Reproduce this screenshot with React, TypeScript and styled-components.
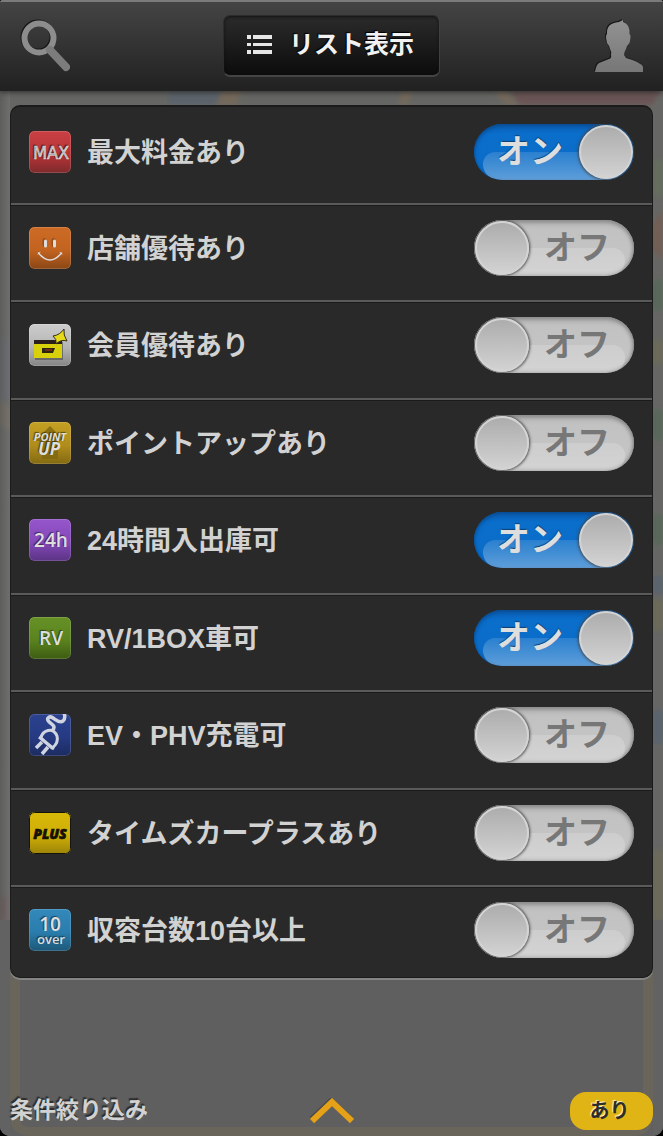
import React from "react";
import styled, { createGlobalStyle, css } from "styled-components";

const GlobalStyle = createGlobalStyle`
  * { box-sizing: border-box; }
  html { background: #000; }
  body {
    margin: 0;
    font-family: "Liberation Sans", "Noto Sans CJK JP", sans-serif;
    font-weight: 700;
    color: #d2d2d2;
  }
  button { font: inherit; color: inherit; border: 0; padding: 0; background: none; cursor: pointer; }
`;

const Screen = styled.div`
  position: relative;
  isolation: isolate;
  display: flex;
  flex-direction: column;
  min-height: 100vh;
  overflow: hidden;
  border-radius: 3px 3px 10px 10px;
  background: #606060;
`;

const MapLayer = styled.svg`
  position: absolute;
  inset: 0;
  z-index: -1;
  width: 100%;
  height: 100%;
`;

const Header = styled.header`
  display: grid;
  grid-template-columns: 1fr auto 1fr;
  align-items: center;
  height: 91px;
  padding: 0 20px 2px;
  border-top: 2px solid #7b7b7b;
  background: linear-gradient(#444, #212121);
  box-shadow: 0 1px 6px rgba(0, 0, 0, 0.6);
`;

const IconButton = styled.button<{ $end?: boolean }>`
  display: flex;
  justify-self: ${(p) => (p.$end ? "end" : "start")};
`;

const ListButton = styled.button`
  && {
    display: flex;
    align-items: center;
    gap: 17px;
    height: 62px;
    padding: 0 25px 2px 23px;
    border: 1px solid #2c2c2c;
    border-bottom: 2px solid #444;
    border-right-color: #404040;
    border-radius: 7px;
    background: linear-gradient(#2b2b2b, #0c0c0c);
    box-shadow: inset 0 1px 3px #111;
    color: #f2f2f2;
    font-size: 25px;
    line-height: 30px;
    text-shadow: -1px -1px 1px #000;
  }
`;

const Panel = styled.ul`
  margin: 14px 10px 0;
  padding: 0;
  list-style: none;
  border-radius: 10px;
  overflow: hidden;
  background: #292929;
  border: 1px solid #1b1b1b;
  border-top: 2px solid #1b1b1b;
  box-shadow: 0 2px 0 #858585;
`;

const Item = styled.li`
  height: 97px;
  padding: 15px 18px 0;
  border-top: 2px solid #5a5a5a;
  box-shadow: inset 0 1px 0 #1b1b1b;
  &:nth-child(odd) { height: 98px; }
  &:first-child {
    height: 96px;
    padding-top: 17px;
    border-top: 0;
    box-shadow: none;
  }
  &:last-child { height: 92px; }
`;

const ItemLabel = styled.label`
  display: flex;
  align-items: center;
  gap: 16px;
  cursor: pointer;
`;

const ItemText = styled.span`
  flex: 1;
  padding-top: 2px;
  font-size: 27px;
  line-height: 54px;
  white-space: nowrap;
`;

const SwitchBox = styled.span`
  position: relative;
  display: block;
  width: 160px;
`;

const SwitchInput = styled.input`
  position: absolute;
  inset: 0;
  width: 100%;
  height: 100%;
  margin: 0;
  opacity: 0;
  cursor: pointer;
`;

const Track = styled.span<{ $on: boolean }>`
  position: relative;
  isolation: isolate;
  display: flex;
  align-items: center;
  justify-content: space-between;
  height: 56px;
  padding: 0 1px;
  border-radius: 28px;
  overflow: hidden;
  font-size: 33px;
  line-height: 56px;
  &::before {
    content: "";
    position: absolute;
    z-index: -1;
    inset: 28px 9px 0;
    border-radius: 20px 20px 26px 26px;
    background: ${(p) =>
      p.$on
        ? "linear-gradient(rgba(255,255,255,.13), rgba(255,255,255,.34))"
        : "linear-gradient(rgba(255,255,255,.16), rgba(255,255,255,.24))"};
  }
  ${(p) =>
    p.$on
      ? css`
          flex-direction: row-reverse;
          color: #dedede;
          text-shadow: 0 -1px 1px #0a4076;
          background: linear-gradient(#0a5fb4, #0a6ecb 18%, #0b6cc6);
          box-shadow: inset 0 2px 4px #0a4c92, inset 0 0 2px #0a4c92;
        `
      : css`
          color: #777;
          background: linear-gradient(#b4b4b4, #c2c2c2 18%, #c6c6c6);
          box-shadow: inset 0 2px 4px #8c8c8c, inset 0 0 4px #777;
        `}
`;

const TrackText = styled.span<{ $on: boolean }>`
  padding: ${(p) => (p.$on ? "0 0 0 22px" : "0 23px 0 0")};
`;

const Knob = styled.span`
  width: 54px;
  height: 54px;
  border-radius: 50%;
  border: 2px solid #d4d4d4;
  background: linear-gradient(#adadad, #d2d2d2);
  box-shadow: 0 0 3px 1px #444;
`;

const Footer = styled.footer`
  display: grid;
  grid-template-columns: 1fr auto 1fr;
  align-items: center;
  margin-top: auto;
  padding: 0 10px 6px;
`;

const FooterText = styled.span`
  font-size: 23px;
  line-height: 36px;
  padding-bottom: 2px;
  white-space: nowrap;
  text-shadow: -1px -2px 1px #2c2c2c;
`;

const StatusPill = styled.button`
  && {
    justify-self: end;
    width: 83px;
    height: 38px;
    padding-right: 4px;
    border-radius: 16px;
    background: #e0b414;
    color: #2c2c2c;
    font-size: 20px;
    line-height: 36px;
    text-shadow: -1px -1px 1px #fff4cc;
  }
`;

const Badge = styled.svg`
  display: block;
  flex: none;
  width: 42px;
  height: 42px;
  border-radius: 5px;
`;

type Kind = "max" | "smile" | "card" | "point" | "day" | "rv" | "plug" | "plus" | "over";

const badgeColors: Record<Kind, [string, string, string]> = {
  max: ["#c94043", "#b93438", "#7d2a2c"],
  smile: ["#cd6b25", "#c26320", "#8a4715"],
  card: ["#cdcdcd", "#b5b5b5", "#858585"],
  point: ["#c4a022", "#b08d1c", "#836911"],
  day: ["#9556cb", "#8449b8", "#5b3384"],
  rv: ["#679127", "#5a831e", "#3d5c12"],
  plug: ["#2c428f", "#263a83", "#1c2b60"],
  plus: ["#d8b808", "#d0af07", "#9c8408"],
  over: ["#3389bb", "#2a7dad", "#1d5878"],
};

const BadgeText = styled.text<{ $size: number; $dark?: boolean; $italic?: boolean; $weight?: number; $narrow?: boolean }>`
  font-family: ${(p) => (p.$narrow ? '"DejaVu Sans Condensed", ' : "")}"Open Sans", "Noto Sans", sans-serif;
  font-size: ${(p) => p.$size}px;
  font-weight: ${(p) => p.$weight ?? 600};
  font-style: ${(p) => (p.$italic ? "italic" : "normal")};
  fill: ${(p) => (p.$dark ? "#151104" : "#dedede")};
  text-anchor: middle;
  text-shadow: ${(p) => (p.$dark ? "none" : "-1px -1px 1px rgba(0, 0, 0, 0.5)")};
`;

const art: Record<Kind, React.ReactNode> = {
  max: <BadgeText x="22" y="28" $size={18} $weight={500} $narrow stroke="#dedede" strokeWidth=".5">MAX</BadgeText>,
  smile: (
    <g fill="none" stroke="#dedede" strokeLinecap="round">
      <path d="M16.500 14v5M25.500 14v5" stroke="#6d3a13" strokeWidth="4" transform="translate(-1 -1)" opacity=".5" />
      <path d="M16.500 14v5M25.500 14v5" strokeWidth="3" />
      <path d="M9.500 26Q21 40 32.500 26" strokeWidth="1.500" />
      <path d="M9 27l2-1.500M31 25.500l2 1.500" strokeWidth="1" />
    </g>
  ),
  card: (
    <g>
      <path d="M6 18h28v18H6z" fill="#555" opacity=".7" />
      <path d="M5 20h28v14H5z" fill="#d9d00c" />
      <path d="M5 16h28v4H5z" fill="#2a1f1c" />
      <path d="M13 24h13l-2 5H13z" fill="#2a2410" />
      <path d="M16 26h7" stroke="#b8321c" strokeWidth="1" />
      <path d="M35 5Q34 11 38 17Q32 15 27 20Q28 15 24 12Q31 11 35 5z" fill="#e6da1b" stroke="#333010" strokeWidth="1" />
    </g>
  ),
  point: (
    <g>
      <path d="M21 4l15 15h-7v18H13V19H6z" fill="#80670f" opacity=".8" />
      <BadgeText $size={11} $italic $weight={700}>
        <tspan x="21" y="19">POINT</tspan>
        <tspan x="20" y="33" fontSize="17">UP</tspan>
      </BadgeText>
    </g>
  ),
  day: <BadgeText x="22" y="28" $size={19}>24h</BadgeText>,
  rv: <BadgeText x="22" y="28" $size={19}>RV</BadgeText>,
  plug: (
    <g fill="none" stroke="#d0d4e0" strokeLinejoin="round">
      <path d="M23 17C30 10 16 9 19 4C23-1 28 11 34 7Q37 4 35-1" strokeWidth="3.500" />
      <path d="M12 24L23 34Q30 29 28 22Q25 15 19 16.500Q13 18 12 24z" strokeWidth="3" />
      <path d="M10 23l15 12" strokeWidth="3" />
      <path d="M13 28l-6 6M19 33l-6 7" strokeWidth="3.500" />
    </g>
  ),
  plus: (
    <g>
      <rect x=".5" y=".5" width="41" height="41" rx="5" fill="none" stroke="#161408" />
      <BadgeText x="21" y="27" $size={14} $dark $italic $weight={800} stroke="#151104" strokeWidth=".6">PLUS</BadgeText>
    </g>
  ),
  over: (
    <BadgeText $size={19}>
      <tspan x="21" y="22">10</tspan>
      <tspan x="22" y="35" fontSize="13">over</tspan>
    </BadgeText>
  ),
};

function FilterBadge({ kind }: { kind: Kind }) {
  const [top, mid, bottom] = badgeColors[kind];
  return (
    <Badge viewBox="0 0 42 42" aria-hidden="true">
      <defs>
        <linearGradient id={`badge-${kind}`} x1="0" y1="0" x2="0" y2="1">
          <stop offset="0" stopColor={top} />
          <stop offset=".55" stopColor={mid} />
          <stop offset="1" stopColor={bottom} />
        </linearGradient>
      </defs>
      <rect width="42" height="42" rx="5" fill={`url(#badge-${kind})`} />
      <rect x=".5" y=".5" width="41" height="41" rx="5" fill="none" stroke="#fff" opacity=".15" />
      {art[kind]}
    </Badge>
  );
}

function MapBackground() {
  return (
    <MapLayer viewBox="0 0 663 1136" preserveAspectRatio="none" aria-hidden="true">
      <defs>
        <linearGradient id="edge" x1="0" x2="1" y1="0" y2="0">
          <stop offset="0" stopColor="#555" />
          <stop offset="1" stopColor="#777" />
        </linearGradient>
        <filter id="soft" x="-20%" y="-20%" width="140%" height="140%">
          <feGaussianBlur stdDeviation="2" />
        </filter>
      </defs>
      <rect width="663" height="1136" fill="#606060" />
      <rect y="91" width="663" height="829" fill="#666764" />
      <g filter="url(#soft)">
        <path d="M168 91h52v14h-52z" fill="#5c636a" />
        <path d="M222 91h20l-6 14h-20zM402 91h10l-4 14h-10zM494 91h12l12 14h-12z" fill="#74695c" />
        <path d="M510 91h150l-8 14H520z" fill="#6a5555" />
        <path d="M0 340h11v60H0z" fill="#63686f" />
        <path d="M0 400l11 10v22L0 424z" fill="#776e5f" />
        <path d="M0 896h8v24H0z" fill="#705858" />
        <path d="M652 160h11v36h-11z" fill="#656d5e" />
        <path d="M652 225l11-15v50l-11-10z" fill="#725f54" />
        <path d="M652 280h11v30h-11zM652 410h11v30h-11zM652 515h11v30h-11z" fill="#59675a" />
        <path d="M652 340h11v24h-11zM652 600h11v30h-11z" fill="#6c6b58" />
        <path d="M652 576h11v18h-11zM652 710h11v34h-11z" fill="#5a646d" />
        <path d="M652 850h11v70h-11z" fill="#6c6a5a" />
      </g>
      <path d="M0 91h10v1045H0z" fill="url(#edge)" opacity=".5" />
      <path d="M0 920h10v216H0zM653 920h10v216h-10z" fill="#626262" />
      <path d="M10 970h643v145q0 21-21 21H31q-21 0-21-21z" fill="#69655b" />
      <path d="M20 970h623v148q0 9-9 9H29q-9 0-9-9z" fill="#5f5f5f" />
    </MapLayer>
  );
}

function SearchIcon() {
  return (
    <svg width="50" height="54" viewBox="0 0 50 54" aria-hidden="true">
      <g fill="none" strokeLinecap="round">
        <g stroke="#171717" transform="translate(-1 -1)">
          <circle cx="19" cy="19" r="14.500" strokeWidth="6" />
          <path d="M30 31L46 48" strokeWidth="7" />
        </g>
        <circle cx="19" cy="19" r="14.500" stroke="#8d8d8d" strokeWidth="6" />
        <path d="M30 31L46 48" stroke="#7c7c7c" strokeWidth="8" />
      </g>
    </svg>
  );
}

function PersonIcon() {
  const shape =
    "M24 2L28 0L28 2Q35 4 34.500 14Q36.500 15 34.500 23Q32 25 31 29Q29 32 29 35L31 38Q46 42 48 47V52H0Q1 45 4 43L14 39Q17 38 16 35Q17 32 15 29Q14 25 12 23Q10 15 12 14Q11 3 24 2z";
  return (
    <svg width="50" height="54" viewBox="-2 -1 50 54" aria-hidden="true">
      <defs>
        <linearGradient id="person" x1="0" x2="0" y1="0" y2="1">
          <stop offset="0" stopColor="#929292" />
          <stop offset="1" stopColor="#777" />
        </linearGradient>
      </defs>
      <path d={shape} fill="#171717" transform="translate(-1 -1)" />
      <path d={shape} fill="url(#person)" />
    </svg>
  );
}

function ListIcon() {
  return (
    <svg width="25" height="19" viewBox="0 0 25 19" fill="#e6e6e6" aria-hidden="true">
      <path d="M0 0h4v4H0zM6 0h19v4H6zM0 8h4v3H0zM6 8h19v3H6zM0 15h4v4H0zM6 15h19v4H6z" />
    </svg>
  );
}

function ChevronUp() {
  return (
    <svg width="44" height="26" viewBox="0 0 44 26" fill="none" aria-hidden="true">
      <path d="M2 23L22 4L42 23" stroke="#3c3c3c" strokeWidth="6" transform="translate(-1 -1)" opacity=".6" />
      <path d="M2 23L22 4L42 23" stroke="#e5a117" strokeWidth="6" />
    </svg>
  );
}

const filters: { kind: Kind; label: string; on: boolean }[] = [
  { kind: "max", label: "最大料金あり", on: true },
  { kind: "smile", label: "店舗優待あり", on: false },
  { kind: "card", label: "会員優待あり", on: false },
  { kind: "point", label: "ポイントアップあり", on: false },
  { kind: "day", label: "24時間入出庫可", on: true },
  { kind: "rv", label: "RV/1BOX車可", on: true },
  { kind: "plug", label: "EV・PHV充電可", on: false },
  { kind: "plus", label: "タイムズカープラスあり", on: false },
  { kind: "over", label: "収容台数10台以上", on: false },
];

function FilterRow({ kind, label, initial }: { kind: Kind; label: string; initial: boolean }) {
  const [on, setOn] = React.useState(initial);
  return (
    <Item>
      <ItemLabel>
        <FilterBadge kind={kind} />
        <ItemText>{label}</ItemText>
        <SwitchBox>
          <Track $on={on}>
            <Knob />
            <TrackText $on={on}>{on ? "オン" : "オフ"}</TrackText>
          </Track>
          <SwitchInput type="checkbox" role="switch" checked={on} onChange={(e) => setOn(e.target.checked)} />
        </SwitchBox>
      </ItemLabel>
    </Item>
  );
}

export default function App() {
  return (
    <>
      <GlobalStyle />
      <Screen>
        <MapBackground />
        <Header>
          <IconButton aria-label="検索"><SearchIcon /></IconButton>
          <ListButton><ListIcon />リスト表示</ListButton>
          <IconButton $end aria-label="アカウント"><PersonIcon /></IconButton>
        </Header>
        <Panel>
          {filters.map((f) => (
            <FilterRow key={f.kind} kind={f.kind} label={f.label} initial={f.on} />
          ))}
        </Panel>
        <Footer>
          <FooterText>条件絞り込み</FooterText>
          <IconButton aria-label="閉じる"><ChevronUp /></IconButton>
          <StatusPill>あり</StatusPill>
        </Footer>
      </Screen>
    </>
  );
}
